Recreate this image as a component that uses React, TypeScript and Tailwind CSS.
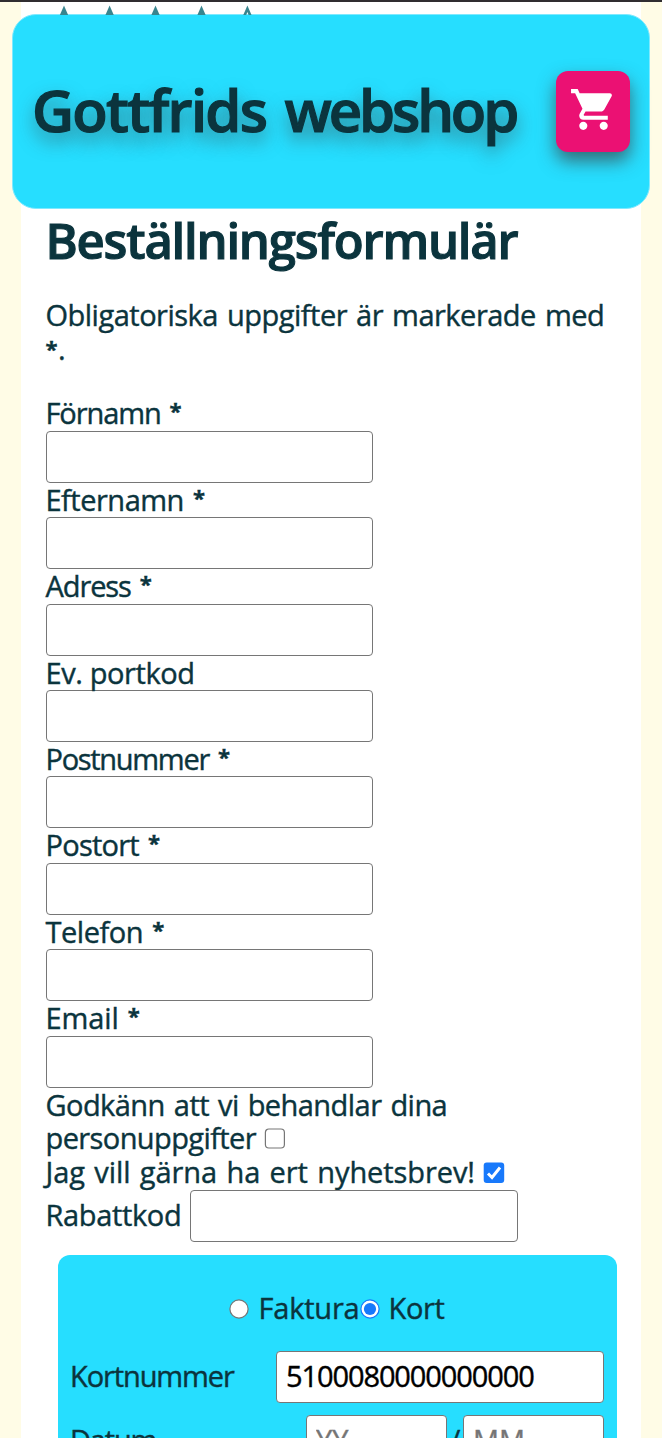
import React from "react";

const fields = [
  { label: "Förnamn", required: true, tracking: "tracking-[-1.1px]" },
  { label: "Efternamn", required: true, tracking: "tracking-[-0.5px]" },
  { label: "Adress", required: true, tracking: "tracking-[-1.1px]" },
  { label: "Ev. portkod", required: false, tracking: "tracking-[-0.4px]" },
  { label: "Postnummer", required: true, tracking: "tracking-[-1.3px]" },
  { label: "Postort", required: true, tracking: "tracking-[-0.75px]" },
  { label: "Telefon", required: true, tracking: "tracking-[-0.45px]" },
  { label: "Email", required: true, tracking: "tracking-[-0.1px]" },
];

const inputBox =
  "block h-[52px] rounded-[4px] border-[1.5px] border-[#767676] bg-white px-[9px] pb-[2px] text-[29px] text-black outline-none";

function StarTips() {
  return (
    <svg width="280" height="13" viewBox="0 0 280 13" className="block">
      {[43, 88.6, 134.5, 180.5].map((x) => (
        <path key={x} d={`M${x} 3.5 L${x + 5} 15 L${x - 5} 15 Z`} fill="#38858f" />
      ))}
      <path d="M226.4 3.5 L231.4 15 H228.4 L226.4 10 L224.4 15 H221.4 Z" fill="#38858f" />
    </svg>
  );
}

function Star() {
  return <span className="relative top-[-3px] text-[22px] font-bold">*</span>;
}

function Checkbox({ checked = false }: { checked?: boolean }) {
  return (
    <svg width="22" height="22" viewBox="0 0 22 22" className="block shrink-0">
      {checked ? (
        <>
          <rect x="0.7" y="0.5" width="20.5" height="20.5" rx="3" fill="#1879fb" />
          <path d="M5 11.5 L9 15.5 L17 5.5" fill="none" stroke="white" strokeWidth="3" />
        </>
      ) : (
        <rect x="1.4" y="1" width="19" height="19" rx="3.5" fill="white" stroke="#767676" strokeWidth="1.2" />
      )}
    </svg>
  );
}

function Radio({ checked = false }: { checked?: boolean }) {
  return (
    <svg width="20" height="20" viewBox="0 0 20 20" className="block shrink-0">
      <circle cx="10" cy="10" r="9.1" fill="white" stroke={checked ? "#1879fb" : "#767676"} strokeWidth="1.2" />
      {checked && <circle cx="10" cy="10" r="6.1" fill="#1879fb" />}
    </svg>
  );
}

export default function App() {
  return (
    <div className="h-[1438px] w-[662px] overflow-hidden border-t-2 border-[#302d30] bg-[#fffce6] font-['Open_Sans',sans-serif] text-[29px] leading-[34.4px] text-[#0b343d] [-webkit-text-stroke:0.4px]">
      <div className="mx-[21px] h-full bg-white">
        <StarTips />
        <header className="-mx-[9px] -mt-px flex h-[195px] items-center justify-between rounded-[24px] border border-[#7ee9ff] bg-[#26deff] pr-[19px] pl-[19px]">
          <h1 className="-mt-[3px] text-[58px] leading-[68px] font-semibold whitespace-nowrap [-webkit-text-stroke:1.2px] [text-shadow:0_9px_18px_rgba(60,60,60,0.6)] [word-spacing:5px]">
            <span className="tracking-[-1.75px]">Gottfrids </span>
            <span className="tracking-[-3.1px]">webshop</span>
          </h1>
          <button
            aria-label="Kundvagn"
            className="flex h-[81px] w-[74px] shrink-0 items-start justify-center rounded-[12px] bg-[#eb1173] pt-[13.5px] shadow-[0_9px_18px_rgba(60,60,60,0.7)]"
          >
            <svg width="49" height="49" viewBox="0 0 24 24" fill="white">
              <path d="M7 18c-1.1 0-1.99.9-1.99 2S5.900 22 7 22s2-.9 2-2-.9-2-2-2zM1 2v2h2l3.600 7.590-1.350 2.450c-.16.28-.25.61-.25.96 0 1.100.9 2 2 2h12v-2H7.420c-.14 0-.25-.11-.25-.25l.03-.12.9-1.630h7.450c.75 0 1.410-.41 1.750-1.030l3.580-6.490c.08-.14.12-.31.12-.48 0-.55-.45-1-1-1H5.210l-.94-2H1zm16 16c-1.100 0-1.990.9-1.990 2s.89 2 1.990 2 2-.9 2-2-.9-2-2-2z" />
            </svg>
          </button>
        </header>
        <main className="pr-[23px] pl-[24.5px]">
          <h2 className="mt-px h-[60px] text-[49px] leading-[60px] font-semibold tracking-[-1.22px] whitespace-nowrap [-webkit-text-stroke:1.1px]">
            Beställningsformulär
          </h2>
          <p className="mt-[28px] h-[68.8px] tracking-[-0.5px] whitespace-nowrap [word-spacing:2px]">
            Obligatoriska uppgifter är markerade med
            <br />
            <Star />
            <span className="ml-[1px]">.</span>
          </p>
          <form className="mt-[29.6px]">
            {fields.map((f) => (
              <label key={f.label} className="block h-[86.4px]">
                <span className="flex h-[34.4px] gap-[9px]">
                  <span className={f.tracking}>{f.label}</span>
                  {f.required && <Star />}
                </span>
                <input className={`${inputBox} w-[327.5px]`} />
              </label>
            ))}
            <div className="whitespace-nowrap">
              <div className="h-[34px] tracking-[-0.55px] [word-spacing:2px]">Godkänn att vi behandlar dina</div>
              <div className="flex h-[34px] items-center gap-[8px]">
                <span className="tracking-[-0.6px]">personuppgifter</span>
                <Checkbox />
              </div>
              <div className="flex h-[34px] items-center gap-[8px]">
                <span className="tracking-[-0.09px] [word-spacing:2px]">Jag vill gärna ha ert nyhetsbrev!</span>
                <Checkbox checked />
              </div>
              <div className="flex h-[52px] items-center gap-[9px]">
                <span className="tracking-[-0.35px]">Rabattkod</span>
                <input className={`${inputBox} w-[328px]`} />
              </div>
            </div>
            <section className="mt-[13px] ml-[12px] h-[300px] w-[559px] rounded-t-[12px] bg-[#26deff] px-[12.5px] pt-[37px] whitespace-nowrap">
              <div className="flex h-[34px] items-center justify-center">
                <Radio />
                <span className="-mt-px ml-[9px] tracking-[-0.2px]">Faktura</span>
                <Radio checked />
                <span className="-mt-px ml-[9px] tracking-[-0.35px]">Kort</span>
              </div>
              <div className="mt-[25px] flex h-[52px] items-center justify-between">
                <span className="-mt-px tracking-[-1.1px]">Kortnummer</span>
                <input
                  defaultValue="5100080000000000"
                  className={`${inputBox} w-[328px] tracking-[-1.1px] [-webkit-text-stroke:0.4px]`}
                />
              </div>
              <div className="mt-[12px] flex h-[52px] items-center">
                <span className="-mt-px mr-auto tracking-[-1.2px]">Datum</span>
                <input placeholder="YY" className={`${inputBox} w-[141px] placeholder:text-[#757575]`} />
                <span className="w-[16px] text-center">/</span>
                <input placeholder="MM" className={`${inputBox} w-[141px] placeholder:text-[#757575]`} />
              </div>
            </section>
          </form>
        </main>
      </div>
    </div>
  );
}
